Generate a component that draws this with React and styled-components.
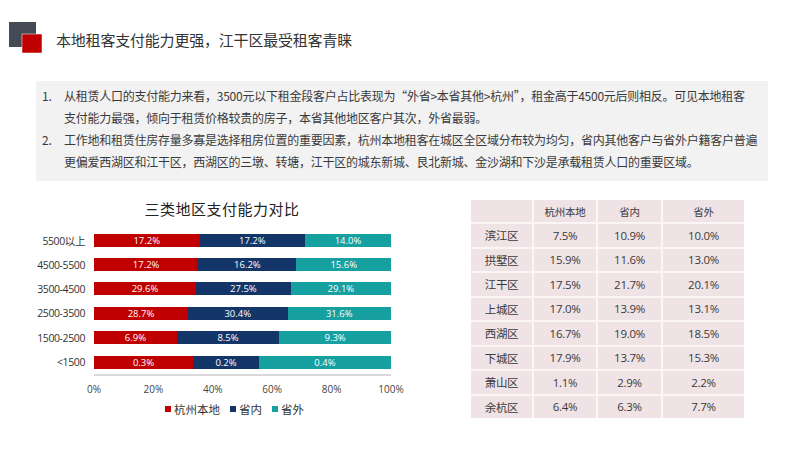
import React from "react";
import styled, { createGlobalStyle } from "styled-components";

const Global = createGlobalStyle`
  html, body { margin: 0; padding: 0; background: #ffffff; }
  body { width: 800px; height: 450px; overflow: hidden; font-family: "Noto Sans CJK SC", "Noto Sans", sans-serif; }
`;

const Page = styled.div`
  width: 800px;
  height: 450px;
  display: flex;
  flex-direction: column;
  background: #fff;
`;

const Header = styled.header`
  height: 81px;
  flex: none;
  box-sizing: border-box;
  padding: 22px 0 0 9px;
  display: flex;
  align-items: flex-start;
  gap: 14px;
`;

const Title = styled.h1`
  margin: 8px 0 0;
  font-size: 15px;
  line-height: 20px;
  font-weight: 400;
  color: #333;
  letter-spacing: -0.2px;
`;

const Summary = styled.div`
  margin: 0 32px 0 36px;
  height: 100px;
  flex: none;
  box-sizing: border-box;
  background: #f2f2f2;
  padding: 4px 0 0 6px;
`;

const Item = styled.div`
  display: flex;
  font-size: 12px;
  line-height: 22px;
  color: #3a3a3a;
  white-space: nowrap;
  letter-spacing: -0.25px;
`;

const Num = styled.span`
  width: 22px;
  flex: none;
`;

const Bottom = styled.div`
  display: flex;
  padding: 19px 0 0 30px;
  gap: 41px;
`;

const ChartBox = styled.div`
  width: 400px;
  display: flex;
  flex-direction: column;
`;

const ChartTitle = styled.div`
  margin-left: 60px;
  width: 264px;
  text-align: center;
  font-size: 15px;
  line-height: 18px;
  color: #222;
  letter-spacing: 0.5px;
`;

const Plot = styled.div`
  margin-top: 10px;
  display: flex;
  flex-direction: column;
`;

const Row = styled.div`
  display: flex;
  align-items: center;
  height: 24.4px;
`;

const Cat = styled.div`
  width: 55px;
  padding-right: 9px;
  text-align: right;
  font-size: 10.5px;
  color: #333;
  font-family: "Open Sans", "Noto Sans CJK SC", sans-serif;
  letter-spacing: -0.4px;
`;

const Bar = styled.div`
  width: 297px;
  height: 13px;
  display: flex;
`;

const Seg = styled.div`
  height: 100%;
  background: ${(p) => p.$c};
  color: #fff;
  font-size: 9.5px;
  line-height: 13px;
  text-align: center;
  font-family: "Open Sans", "Liberation Sans", sans-serif;
  overflow: hidden;
`;

const AxisLine = styled.div`
  margin-left: 64px;
  width: 297px;
  height: 2px;
  background: #d9d9d9;
`;

const Ticks = styled.div`
  margin-left: 64px;
  width: 297px;
  margin-top: 6px;
  display: flex;
  justify-content: space-between;
`;

const Tick = styled.span`
  width: 0;
  display: flex;
  justify-content: center;
  font-size: 10px;
  line-height: 14px;
  color: #444;
  font-family: "Open Sans", "Liberation Sans", sans-serif;
  white-space: nowrap;
`;

const Legend = styled.div`
  margin: 6px 0 0 135px;
  display: flex;
  gap: 10px;
  font-size: 11.5px;
  line-height: 14px;
  color: #333;
`;

const LegendItem = styled.span`
  display: flex;
  align-items: center;
  gap: 3px;
  &::before {
    content: "";
    width: 6px;
    height: 6px;
    background: ${(p) => p.$c};
  }
`;

const Table = styled.div`
  width: 273px;
  display: grid;
  grid-template-columns: 61px 62px 63px 81px;
  grid-auto-rows: 22.5px;
  grid-template-rows: 22px;
  gap: 2px;
  background: #fbf5f6;
  align-self: flex-start;
`;

const Cell = styled.div`
  background: #efe3e6;
  display: flex;
  align-items: center;
  justify-content: center;
  font-size: ${(p) => (p.$head ? "10.5px" : "11.5px")};
  color: #3a3a3a;
  font-family: "Open Sans", "Noto Sans CJK SC", sans-serif;
  letter-spacing: -0.3px;
`;

const RED = "#c00000";
const NAVY = "#133568";
const TEAL = "#17a0a0";

const bars = [
  ["5500以上", 17.2, 17.2, 14.0],
  ["4500-5500", 17.2, 16.2, 15.6],
  ["3500-4500", 29.6, 27.5, 29.1],
  ["2500-3500", 28.7, 30.4, 31.6],
  ["1500-2500", 6.9, 8.5, 9.3],
  ["<1500", 0.3, 0.2, 0.4],
];

const rows = [
  ["滨江区", "7.5%", "10.9%", "10.0%"],
  ["拱墅区", "15.9%", "11.6%", "13.0%"],
  ["江干区", "17.5%", "21.7%", "20.1%"],
  ["上城区", "17.0%", "13.9%", "13.1%"],
  ["西湖区", "16.7%", "19.0%", "18.5%"],
  ["下城区", "17.9%", "13.7%", "15.3%"],
  ["萧山区", "1.1%", "2.9%", "2.2%"],
  ["余杭区", "6.4%", "6.3%", "7.7%"],
];

const Logo = () => (
  <svg width="33" height="32" viewBox="0 0 33 32">
    <rect x="0" y="0" width="27" height="25" fill="#454a57" />
    <rect x="13" y="12" width="20" height="19" fill="#c00000" stroke="#fff" strokeWidth="0.5" />
  </svg>
);

export default function App() {
  return (
    <Page>
      <Global />
      <Header>
        <Logo />
        <Title>本地租客支付能力更强，江干区最受租客青睐</Title>
      </Header>
      <Summary>
        <Item>
          <Num>1.</Num>
          <span>
            从租赁人口的支付能力来看，3500元以下租金段客户占比表现为“外省&gt;本省其他&gt;杭州”，租金高于4500元后则相反。可见本地租客
            <br />
            支付能力最强，倾向于租赁价格较贵的房子，本省其他地区客户其次，外省最弱。
          </span>
        </Item>
        <Item>
          <Num>2.</Num>
          <span>
            工作地和租赁住房存量多寡是选择租房位置的重要因素，杭州本地租客在城区全区域分布较为均匀，省内其他客户与省外户籍客户普遍
            <br />
            更偏爱西湖区和江干区，西湖区的三墩、转塘，江干区的城东新城、艮北新城、金沙湖和下沙是承载租赁人口的重要区域。
          </span>
        </Item>
      </Summary>
      <Bottom>
        <ChartBox>
          <ChartTitle>三类地区支付能力对比</ChartTitle>
          <Plot>
            {bars.map(([label, a, b, c]) => {
              const s = a + b + c;
              return (
                <Row key={label}>
                  <Cat>{label}</Cat>
                  <Bar>
                    <Seg $c={RED} style={{ width: `${(a / s) * 100}%` }}>{a.toFixed(1)}%</Seg>
                    <Seg $c={NAVY} style={{ width: `${(b / s) * 100}%` }}>{b.toFixed(1)}%</Seg>
                    <Seg $c={TEAL} style={{ width: `${(c / s) * 100}%` }}>{c.toFixed(1)}%</Seg>
                  </Bar>
                </Row>
              );
            })}
          </Plot>
          <AxisLine />
          <Ticks>
            {["0%", "20%", "40%", "60%", "80%", "100%"].map((t) => (
              <Tick key={t}>{t}</Tick>
            ))}
          </Ticks>
          <Legend>
            <LegendItem $c={RED}>杭州本地</LegendItem>
            <LegendItem $c={NAVY}>省内</LegendItem>
            <LegendItem $c={TEAL}>省外</LegendItem>
          </Legend>
        </ChartBox>
        <Table>
          <Cell $head />
          <Cell $head>杭州本地</Cell>
          <Cell $head>省内</Cell>
          <Cell $head>省外</Cell>
          {rows.map((r) =>
            r.map((v, i) => <Cell key={r[0] + i}>{v}</Cell>)
          )}
        </Table>
      </Bottom>
    </Page>
  );
}
